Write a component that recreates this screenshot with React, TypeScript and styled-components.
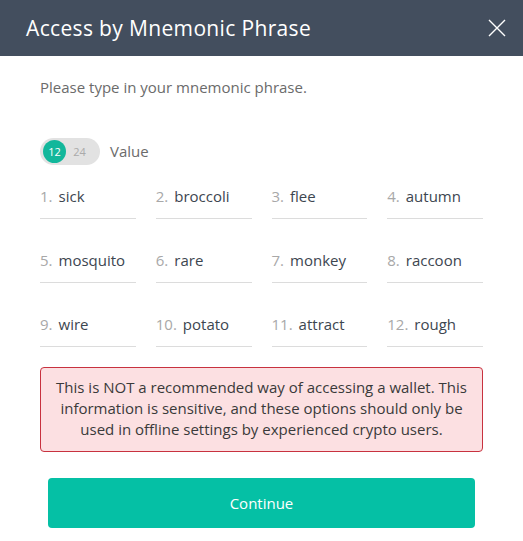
import React from "react";
import styled, { createGlobalStyle } from "styled-components";

const Global = createGlobalStyle`
  html, body { margin: 0; padding: 0; background: #ffffff; }
  body { font-family: "Open Sans", "Liberation Sans", sans-serif; }
  * { box-sizing: border-box; }
`;

const Modal = styled.div`
  width: 523px;
  height: 541px;
  background: #ffffff;
  display: flex;
  flex-direction: column;
`;

const Header = styled.div`
  height: 56px;
  background: #434e5e;
  display: flex;
  align-items: center;
  justify-content: space-between;
  padding: 0 14px 0 26px;
`;

const Title = styled.h1`
  margin: 0;
  font-size: 21px;
  font-weight: 400;
  color: #ffffff;
  letter-spacing: 0.35px;
`;

const CloseButton = styled.button`
  border: none;
  background: transparent;
  padding: 0;
  width: 24px;
  height: 24px;
  display: flex;
  align-items: center;
  justify-content: center;
  cursor: pointer;
`;

const Body = styled.div`
  padding: 21px 40px 0 40px;
  display: flex;
  flex-direction: column;
`;

const Intro = styled.p`
  margin: 0;
  font-size: 15px;
  line-height: 20px;
  color: #6b6b6b;
`;

const ToggleRow = styled.div`
  margin-top: 41px;
  display: flex;
  align-items: center;
  gap: 10px;
`;

const Toggle = styled.div`
  width: 60px;
  height: 27px;
  border-radius: 14px;
  background: #e2e2e2;
  display: flex;
  align-items: center;
  padding: 0 3px;
  gap: 2px;
`;

const ToggleOption = styled.span<{ $active?: boolean }>`
  width: 23px;
  height: 23px;
  border-radius: 50%;
  display: flex;
  align-items: center;
  justify-content: center;
  font-size: 11px;
  color: ${(p) => (p.$active ? "#ffffff" : "#aaaaaa")};
  background: ${(p) => (p.$active ? "#12b79b" : "transparent")};
`;

const ToggleLabel = styled.span`
  font-size: 15px;
  line-height: 20px;
  color: #6b6b6b;
  margin-top: -2px;
`;

const WordGrid = styled.div`
  margin-top: 10px;
  display: grid;
  grid-template-columns: repeat(4, 1fr);
  column-gap: 20px;
  row-gap: 20px;
`;

const WordCell = styled.div`
  height: 44px;
  padding: 11px 0 12px 0;
  border-bottom: 1px solid #dcdcdc;
  display: flex;
  align-items: center;
  gap: 6px;
  font-size: 15px;
  line-height: 20px;
`;

const WordIndex = styled.span`
  color: #a8a8a8;
`;

const WordText = styled.span`
  color: #3d4650;
`;

const Warning = styled.div`
  margin-top: 20px;
  background: #fce0e2;
  border: 1px solid #c8323f;
  border-radius: 4px;
  padding: 9px 10px 11px;
  text-align: center;
  font-size: 15px;
  line-height: 21px;
  color: #3a3a3a;
`;

const ContinueButton = styled.button`
  margin: 26px 8px 0;
  height: 50px;
  border: none;
  border-radius: 4px;
  background: #05c0a5;
  color: #ffffff;
  font-family: inherit;
  font-size: 15px;
  cursor: pointer;
`;

const words = [
  "sick", "broccoli", "flee", "autumn",
  "mosquito", "rare", "monkey", "raccoon",
  "wire", "potato", "attract", "rough",
];

export default function App() {
  return (
    <Modal>
      <Global />
      <Header>
        <Title>Access by Mnemonic Phrase</Title>
        <CloseButton aria-label="close">
          <svg width="20" height="20" viewBox="0 0 20 20">
            <path d="M2 2 L18 18 M18 2 L2 18" stroke="#ffffff" strokeWidth="1.4" fill="none" />
          </svg>
        </CloseButton>
      </Header>
      <Body>
        <Intro>Please type in your mnemonic phrase.</Intro>
        <ToggleRow>
          <Toggle>
            <ToggleOption $active>12</ToggleOption>
            <ToggleOption>24</ToggleOption>
          </Toggle>
          <ToggleLabel>Value</ToggleLabel>
        </ToggleRow>
        <WordGrid>
          {words.map((w, i) => (
            <WordCell key={i}>
              <WordIndex>{i + 1}.</WordIndex>
              <WordText>{w}</WordText>
            </WordCell>
          ))}
        </WordGrid>
        <Warning>
          This is NOT a recommended way of accessing a wallet. This information is sensitive, and these options should only be used in offline settings by experienced crypto users.
        </Warning>
        <ContinueButton>Continue</ContinueButton>
      </Body>
    </Modal>
  );
}
